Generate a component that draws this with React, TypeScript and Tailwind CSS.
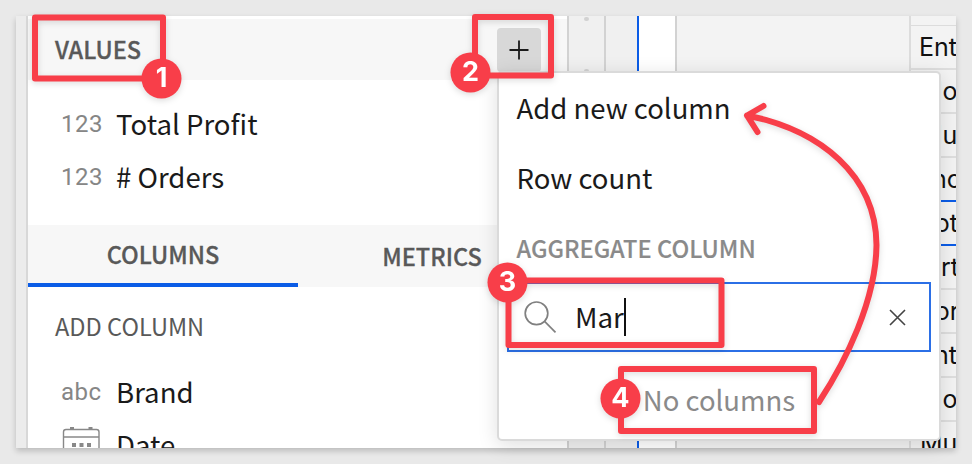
import type { ReactNode } from "react";

const source = "font-['Noto_Sans_CJK_SC','Noto_Sans',sans-serif]";

function FieldRow({ icon, label }: { icon: ReactNode; label: string }) {
  return (
    <div className="flex h-[53px] shrink-0 items-center pl-[33px]">
      <div className="flex w-[55px] shrink-0 items-center">{icon}</div>
      <div className="mb-[2px] whitespace-nowrap text-[27.6px] leading-[40px] text-[#1a1a1a]">{label}</div>
    </div>
  );
}

function TypeMark({ text }: { text: string }) {
  return (
    <span className="font-[Roboto,sans-serif] text-[24px] leading-[28px] tracking-[0.5px] text-[#868686]">
      {text}
    </span>
  );
}

function CalendarIcon() {
  return (
    <svg className="mb-[2px]" width="40" height="36" viewBox="0 0 40 36" fill="none" stroke="#888" strokeWidth="1.4">
      <rect x="2.5" y="3.500" width="35.5" height="30" rx="2.5" />
      <path d="M2.5 11h35.500" />
      <path d="M9 2.500h4M27.500 2.500h4" strokeWidth="3" />
      <path d="M11 19h4M18.500 19h4M26 19h4M11 26h4M18.500 26h4M26 26h4" strokeWidth="4" />
    </svg>
  );
}

function LeftPanel() {
  return (
    <div className="flex w-[541px] shrink-0 flex-col border-r-2 border-[#d2d2d2] bg-white pt-[3px]">
      <div className="flex h-[61px] shrink-0 items-center justify-between bg-[#f7f7f7] pl-[27px] pr-[26px]">
        <span className="mt-[-1px] text-[23.5px] font-medium leading-[36px] text-[#595959] [-webkit-text-stroke:0.3px]">VALUES</span>
        <div className="mt-[1px] flex h-11 w-11 items-center justify-center rounded-[4px] bg-[#d8d8d8]">
          <svg width="20" height="20" viewBox="0 0 20 20" stroke="#1a1a1a" strokeWidth="1.8">
            <path d="M10 .5v19M.5 10h19" />
          </svg>
        </div>
      </div>
      <div className="h-[145px] shrink-0 pt-[17px]">
        <FieldRow icon={<TypeMark text="123" />} label="Total Profit" />
        <FieldRow icon={<TypeMark text="123" />} label="# Orders" />
      </div>
      <div className="flex h-[62px] shrink-0 bg-[#f7f7f7] text-[23.5px] font-medium leading-[36px] text-[#595959] [-webkit-text-stroke:0.3px]">
        <div className="flex w-[270px] justify-center border-b-4 border-[#0b5ce6] pt-[11px]">COLUMNS</div>
        <div className="flex w-[268px] justify-center pt-[13px]">METRICS</div>
      </div>
      <div className="h-[78px] shrink-0 pl-[27px] pt-[21px] text-[23.6px] leading-[36px] text-[#595959]">ADD COLUMN</div>
      <FieldRow icon={<TypeMark text="abc" />} label="Brand" />
      <FieldRow icon={<CalendarIcon />} label="Date" />
    </div>
  );
}

const cells = [
  { text: "Ent", blue: false },
  { text: "Mo", blue: false },
  { text: "Mu", blue: false },
  { text: "Pho", blue: true },
  { text: "Pot", blue: true },
  { text: "Part", blue: false },
  { text: "Por", blue: false },
  { text: "Ent", blue: false },
  { text: "Mo", blue: false },
  { text: "Mu", blue: false },
];

const insets = ["pl-[8px]", "pl-[9px]", "pl-[9px]", "pl-[5px]", "pl-[8px]", "pl-[0px]", "pl-[8px]", "pl-[8px]", "pl-[9px]", "pl-[9px]"];

function Sheet() {
  return (
    <div className="flex min-w-0 flex-1">
      <div className="flex w-[37px] shrink-0 flex-col items-center border-r-2 border-[#d2d2d2] bg-[#f0f0f0]">
        <span className="mt-[1px] h-1 w-[5px] shrink-0 rounded-full bg-[#d2d2d2]" />
        <span className="mt-[48px] h-1 w-[5px] shrink-0 rounded-full bg-[#d2d2d2]" />
      </div>
      <div className="w-[33px] shrink-0 border-r-2 border-[#0b5ce6] bg-[#f0f0f0]" />
      <div className="w-[38px] shrink-0 border-r-2 border-[#d2d2d2] bg-white" />
      <div className="w-[232px] shrink-0 bg-[#f3f3f3]" />
      <div className="w-[47px] shrink-0 overflow-hidden border-l-2 border-[#dcdcdc] bg-[#f3f3f3]">
        <div className="h-[10px] border-b border-[#dcdcdc]" />
        {cells.map((cell, i) => (
          <div
            key={i}
            className={`flex h-[44px] items-center whitespace-nowrap border-b-2 pt-[2px] font-[Inter,sans-serif] text-[25px] text-[#111] ${insets[i]} ${
              cell.blue ? "border-[#0b5ce6]" : "border-[#dedede]"
            }`}
          >
            {cell.text}
          </div>
        ))}
      </div>
    </div>
  );
}

function Menu() {
  return (
    <div className="absolute left-[497px] top-[71px] flex h-[370px] w-[444px] flex-col rounded-[5px] border-2 border-[#dadada] bg-white shadow-[0_4px_20px_rgba(0,0,0,0.13)]">
      <div className="flex h-[70px] shrink-0 items-center pb-[2px] pl-[17.5px] text-[27.5px] leading-[40px] text-[#1a1a1a]">Add new column</div>
      <div className="flex h-[70px] shrink-0 items-center pb-[2px] pl-[17.5px] text-[27.5px] leading-[40px] text-[#1a1a1a]">Row count</div>
      <div className="flex h-[69px] shrink-0 items-center pl-[17.5px] text-[23.6px] font-medium leading-[36px] text-[#8a8a8a] [-webkit-text-stroke:0.15px]">
        AGGREGATE COLUMN
      </div>
      <div className="mx-2 flex h-[70px] shrink-0 items-center border-2 border-[#2b6fe6] pl-[15px] pr-[23px]">
        <svg width="34" height="34" viewBox="0 0 34 34" fill="none" stroke="#808080" strokeWidth="1.7">
          <circle cx="12.5" cy="13.300" r="11.300" />
          <path d="M20.600 21.400 31.500 32.300" />
        </svg>
        <span className="mb-[2px] ml-[17px] text-[27.7px] leading-[40px] text-[#1a1a1a]">Mar</span>
        <span className="h-[38px] w-[2px] bg-[#111]" />
        <svg className="ml-auto" width="17" height="17" viewBox="0 0 17 17" stroke="#444" strokeWidth="1.6">
          <path d="m1 1 15 15M16 1 1 16" />
        </svg>
      </div>
      <div className="flex h-[87px] shrink-0 items-center justify-center pt-[7px] text-[27.5px] leading-[40px] text-[#8a8a8a]">No columns</div>
    </div>
  );
}

const badges = [
  { n: 1, x: 161.5, y: 78.5 },
  { n: 2, x: 470.500, y: 72.500 },
  { n: 3, x: 507.500, y: 282.500 },
  { n: 4, x: 620.500, y: 398.500 },
];

function Annotations() {
  return (
    <svg className="absolute left-0 top-0 drop-shadow-[0_2px_3px_rgba(0,0,0,0.14)]" width="972" height="464" viewBox="0 0 972 464" fill="none" stroke="#f83e49" strokeWidth="6" strokeLinejoin="round">
      <rect x="35" y="17.500" width="128" height="61" />
      <rect x="475" y="17" width="76" height="58.500" />
      <rect x="508.500" y="280.500" width="213" height="64.500" />
      <rect x="621" y="369" width="193" height="62" />
      <path d="M819 402C846 361 876 300 876.500 245C876 175 820 130 747 115.500M763.500 106 747 115.500 757.500 132" strokeLinecap="round" />
      {badges.map((b) => (
        <g key={b.n} stroke="none">
          <circle cx={b.x} cy={b.y} r="20" fill="#f83e49" />
          <text x={b.x} y={b.y + 8.900} textAnchor="middle" fill="white" className="font-[Inter,sans-serif] text-[27px] font-bold">
            {b.n}
          </text>
        </g>
      ))}
    </svg>
  );
}

export default function App() {
  return (
    <div className={`relative h-[464px] w-[972px] overflow-hidden bg-[#e9e9e9] p-4 ${source}`}>
      <div className="h-[432px] w-[940px] shadow-[0_3px_6px_rgba(0,0,0,0.2)]">
        <div className="flex h-[432px] w-[940px] overflow-hidden bg-white">
          <div className="w-3 shrink-0 border-r-2 border-[#d8d8d8] bg-[#ececec]" />
          <LeftPanel />
          <Sheet />
        </div>
      </div>
      <Menu />
      <Annotations />
    </div>
  );
}
